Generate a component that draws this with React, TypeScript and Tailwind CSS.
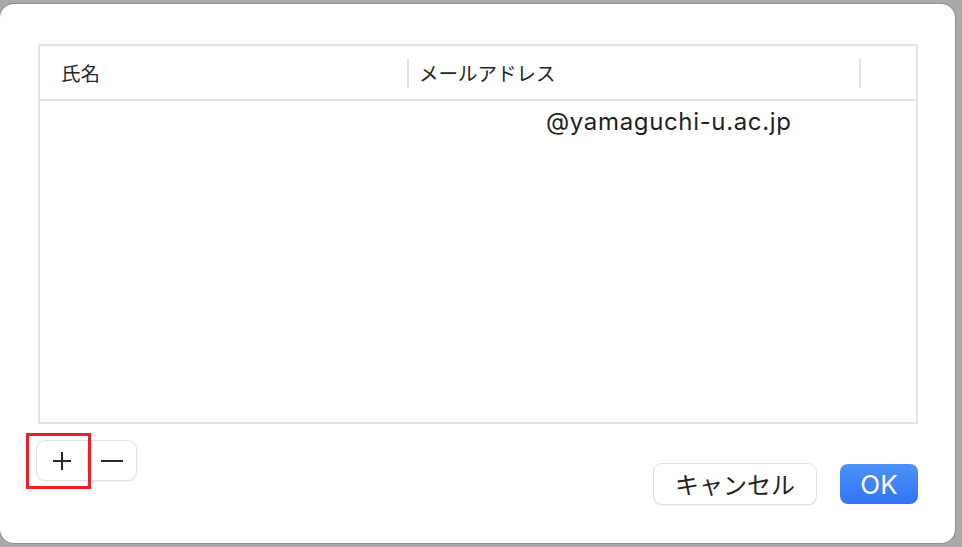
import React from "react";

export default function App() {
  return (
    <div className="w-[962px] h-[547px] bg-[#a9a9a9] overflow-hidden" style={{ fontFamily: '"Noto Sans CJK JP", "Noto Sans", sans-serif' }}>
      <div className="mt-[4px] w-[955px] h-[539px] bg-white rounded-[14px] shadow-[0_0_0_1px_#8e8e8e] pt-[40px] pl-[38px] flex flex-col">
        <div className="w-[880px] h-[380px] border-2 border-[#e3e3e3] flex flex-col">
          <div className="h-[55px] border-b-2 border-[#e3e3e3] flex items-center text-[19.5px] text-[#262626]">
            <div className="w-[367px] pl-[21px] h-[30px] flex items-center">氏名</div>
            <div className="w-[2px] h-[30px] bg-[#e3e3e3]" />
            <div className="w-[450px] pl-[10px] h-[30px] flex items-center">メールアドレス</div>
            <div className="w-[2px] h-[30px] bg-[#e3e3e3]" />
          </div>
          <div className="flex-1">
            <div className="pl-[506px] pt-[6px] text-[24px] tracking-[0.65px] text-[#1f1f1f] leading-[30px]" style={{ fontFamily: 'Inter, "Liberation Sans", sans-serif' }}>
              @yamaguchi-u.ac.jp
            </div>
          </div>
        </div>
        <div className="flex items-start pr-[37px]">
          <div className="relative mt-[17px] ml-[-1px] flex h-[39px] w-[99px] rounded-[8px] bg-white shadow-[0_0_0_1px_#e2e2e2,0_1px_2px_rgba(0,0,0,0.15)]">
            <div className="w-[50px] flex items-center justify-center">
              <svg width="20" height="20" viewBox="0 0 20 20">
                <path d="M10 1v18M1 10h18" stroke="#2a2a2a" strokeWidth="2" />
              </svg>
            </div>
            <div className="w-[1px] my-[9px] bg-[#dcdcdc]" />
            <div className="flex-1 flex items-center justify-center">
              <svg width="22" height="4" viewBox="0 0 22 4">
                <path d="M0 2h22" stroke="#2a2a2a" strokeWidth="2" />
              </svg>
            </div>
            <div className="absolute left-[-11px] top-[-8px] w-[65px] h-[56px] border-[3px] border-[#e8202a]" />
          </div>
          <div className="flex-1" />
          <button className="mt-[40px] h-[40px] w-[162px] rounded-[8px] bg-white text-[24px] text-[#222] shadow-[0_0_0_1px_#e0e0e0,0_1px_2px_rgba(0,0,0,0.2)] flex items-center justify-center">
            キャンセル
          </button>
          <button className="mt-[40px] ml-[24px] h-[40px] w-[78px] rounded-[8px] bg-gradient-to-b from-[#4d91f7] to-[#2f74f5] text-white text-[26px] flex items-center justify-center" style={{ fontFamily: 'Inter, "Liberation Sans", sans-serif' }}>
            OK
          </button>
        </div>
      </div>
    </div>
  );
}
